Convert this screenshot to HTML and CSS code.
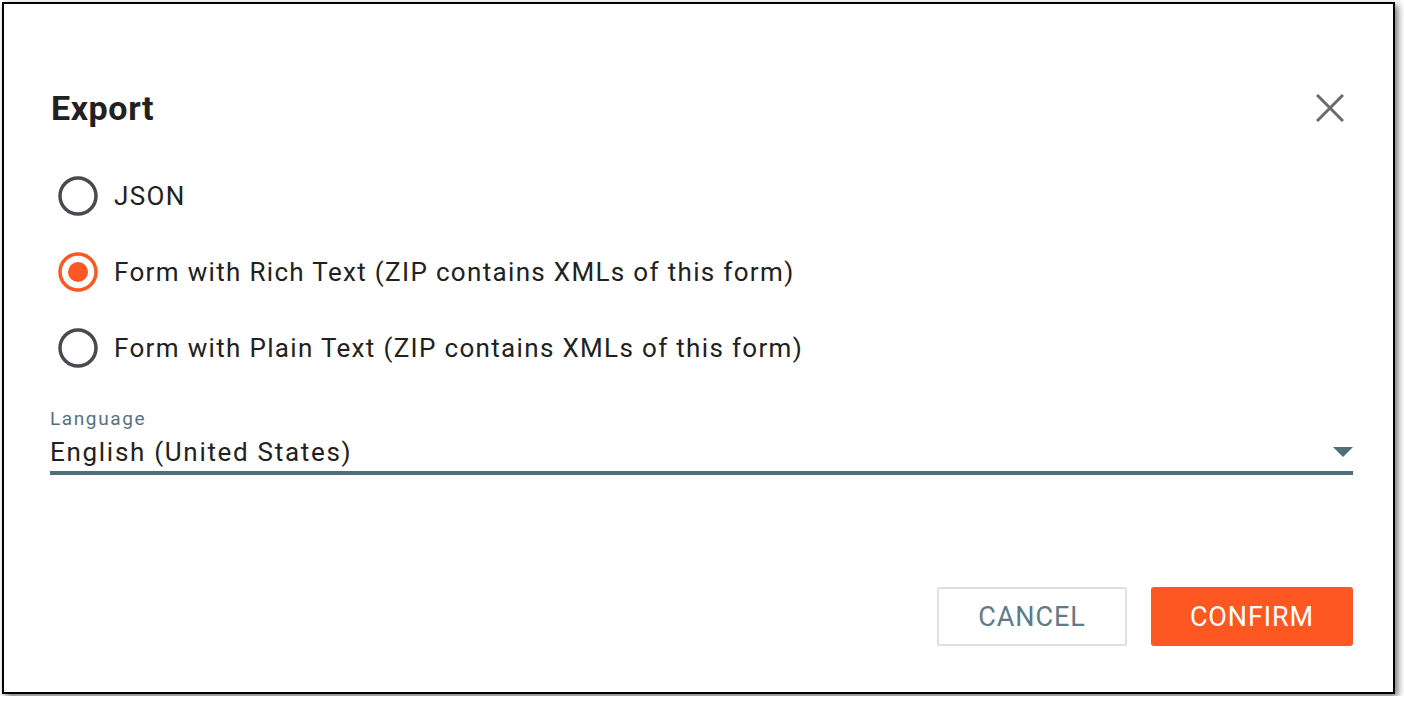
FILE: index.html
```html
<!DOCTYPE html>
<html lang="en">
<head>
  <meta charset="UTF-8" />
  <meta name="viewport" content="width=device-width, initial-scale=1.0"/>
  <title>Export</title>
  <link rel="stylesheet" href="styles.css">
</head>
<body>
  <div class="dialog">
    <!-- Title -->
    <header class="dialog-header">
      <h2 class="dialog-title">Export</h2>
      <button class="close-btn" aria-label="Close">
        <svg width="28" height="28" viewBox="0 0 28 28">
          <path d="M1 1 L27 27 M27 1 L1 27" stroke="#6b6b6b" stroke-width="3" fill="none"/>
        </svg>
      </button>
    </header>

    <!-- Format options -->
    <div class="radio-group">
      <label class="radio-row">
        <svg class="radio" width="40" height="40" viewBox="0 0 40 40">
          <circle cx="20" cy="20" r="18" stroke="#474b50" stroke-width="3.5" fill="none"/>
        </svg>
        <span>JSON</span>
      </label>
      <label class="radio-row">
        <svg class="radio" width="40" height="40" viewBox="0 0 40 40">
          <circle cx="20" cy="20" r="18" stroke="#ff5722" stroke-width="3.5" fill="none"/>
          <circle cx="20" cy="20" r="10" fill="#ff5722"/>
        </svg>
        <span>Form with Rich Text (ZIP contains XMLs of this form)</span>
      </label>
      <label class="radio-row">
        <svg class="radio" width="40" height="40" viewBox="0 0 40 40">
          <circle cx="20" cy="20" r="18" stroke="#474b50" stroke-width="3.5" fill="none"/>
        </svg>
        <span>Form with Plain Text (ZIP contains XMLs of this form)</span>
      </label>
    </div>

    <!-- Language select -->
    <div class="field">
      <div class="field-label">Language</div>
      <div class="field-input">
        <span>English (United States)</span>
        <svg width="20" height="10" viewBox="0 0 20 10">
          <path d="M0 0 L20 0 L10 10 Z" fill="#4f6d7a"/>
        </svg>
      </div>
    </div>

    <footer class="dialog-actions">
      <button class="btn btn-cancel">CANCEL</button>
      <button class="btn btn-confirm">CONFIRM</button>
    </footer>
  </div>
</body>
</html>
```

FILE: styles.css
```css
body {
  margin: 0;
  padding: 2px;
  background: #fff;
  font-family: Roboto, "Liberation Sans", Arial, sans-serif;
  color: #212121;
}

.dialog {
  box-sizing: border-box;
  width: 1393px;
  height: 692px;
  border: 2px solid #000;
  background: #fff;
  box-shadow: 3px 3px 7px rgba(0,0,0,0.55);
  display: flex;
  flex-direction: column;
  padding: 74px 38px 46px 46px;
}

.dialog-header {
  display: flex;
  align-items: center;
  justify-content: space-between;
  height: 60px;
}

.dialog-title {
  margin: 0;
  font-size: 34px;
  font-weight: 700;
  line-height: 40px;
  letter-spacing: 0.6px;
  padding-left: 1px;
}

.close-btn {
  border: none;
  background: none;
  padding: 0;
  margin-right: 11px;
  width: 28px;
  height: 28px;
  cursor: pointer;
}

.radio-group {
  margin-top: 20px;
  display: flex;
  flex-direction: column;
}

.radio-row {
  display: flex;
  align-items: center;
  height: 76px;
  font-size: 26px;
  letter-spacing: 1.33px;
  cursor: pointer;
}

.radio {
  margin-left: 8px;
  margin-right: 16px;
  flex: none;
}

.field {
  margin-top: 22px;
  margin-right: 2px;
}

.field-label {
  font-size: 19px;
  line-height: 22px;
  letter-spacing: 1.6px;
  color: #557283;
}

.field-input {
  margin-top: 6px;
  display: flex;
  align-items: center;
  justify-content: space-between;
  font-size: 26px;
  line-height: 32px;
  letter-spacing: 1.7px;
  padding-bottom: 3px;
  border-bottom: 4px solid #4f6d7a;
}

.field-input svg {
  margin-top: 0;
}

.dialog-actions {
  margin-top: auto;
  display: flex;
  justify-content: flex-end;
  gap: 24px;
  margin-right: 2px;
}

.btn {
  height: 59px;
  font-family: inherit;
  font-size: 27px;
  letter-spacing: 0.9px;
  border-radius: 3px;
  cursor: pointer;
}

.btn-cancel {
  width: 190px;
  background: #fff;
  border: 2px solid #e0e0e0;
  color: #5f7b89;
}

.btn-confirm {
  width: 202px;
  background: #ff5722;
  border: none;
  color: #fff;
}
```
